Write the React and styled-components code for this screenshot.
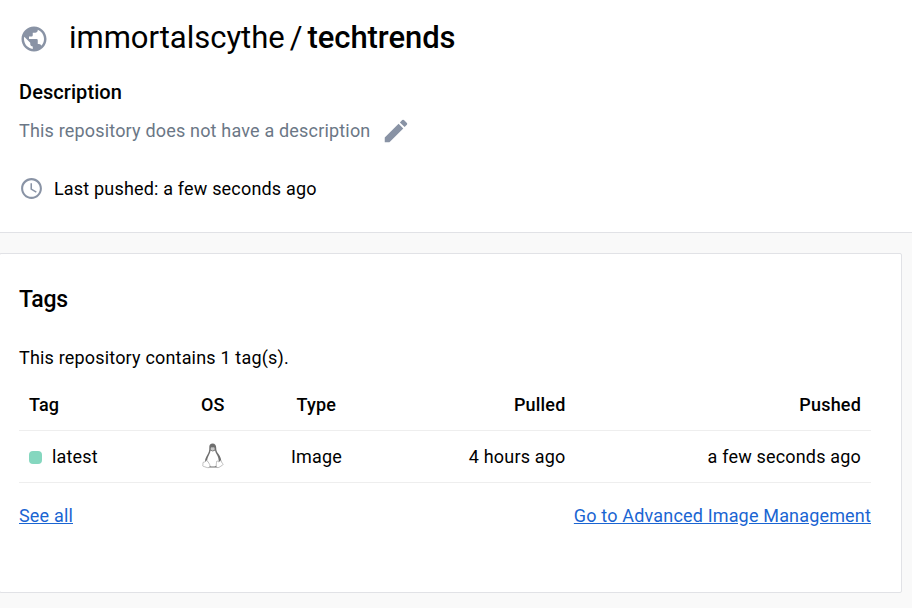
import React from "react";
import styled, { createGlobalStyle } from "styled-components";

const Global = createGlobalStyle`
  * { box-sizing: border-box; }
  body { margin: 0; background: #f9f9f9; font-family: Roboto, "Liberation Sans", sans-serif; font-size: 18px; line-height: 24px; color: #000; letter-spacing: 0.18px; overflow: hidden; }
  h1, h2, p { margin: 0; font-weight: 400; }
`;
const Page = styled.main`
  width: 912px; height: 608px; overflow: hidden;
`;
const Header = styled.header`
  height: 233px; background: #fff; border-bottom: 1px solid #e1e2e6; padding: 18px 19px 0;
`;
const TitleRow = styled.div`
  display: flex; align-items: center; height: 40px; gap: 20px;
  svg { margin-top: 1px; }
`;
const Title = styled.h1`
  display: flex; gap: 5px;
  font-size: 31px; line-height: 40px; letter-spacing: -0.02px;
  b { font-weight: 500; letter-spacing: -0.06px; }
`;
const Label = styled.h2`
  margin-top: 22px; font-size: 20px; font-weight: 500; line-height: 24px; letter-spacing: 0.07px;
`;
const DescriptionRow = styled.div`
  display: flex; align-items: center; height: 30px; margin-top: 12px; gap: 11px; color: #6b7786;
`;
const PushedRow = styled.div`
  display: flex; align-items: center; height: 24px; margin-top: 31px; gap: 10px;
  svg { margin-top: -2px; }
`;
const Card = styled.section`
  width: 903px; height: 340px; margin: 20px 0 0 -1px; padding: 31px 30px 0 19px; background: #fff; border: 1px solid #e1e2e6; border-radius: 2px;
`;
const CardTitle = styled.h2`
  font-size: 23px; line-height: 30px; font-weight: 500; letter-spacing: -0.25px;
`;
const Summary = styled.p`
  margin-top: 31px;
`;
const Table = styled.div`
  margin-top: 9px;
`;
const Row = styled.div`
  display: grid; grid-template-columns: 172px 90px 120px 174.5px 1fr; align-items: center;
  height: 52px; border-bottom: 1px solid #eee; font-weight: ${(p) => (p.$head ? 500 : 400)};
`;
const Cell = styled.div`
  display: flex; align-items: center; padding: 0 10px; padding-left: ${(p) => p.$left ?? 10}px;
  justify-content: ${(p) => (p.$end ? "flex-end" : "flex-start")};
`;
const Dot = styled.span`
  width: 13px; height: 13px; margin: 1px 10px 0 0; border-radius: 4px; background: #85d7bf;
`;
const Links = styled.nav`
  display: flex; justify-content: space-between; margin-top: 21px;
`;
const Link = styled.a`
  color: #1a65d2; text-decoration: underline; letter-spacing: 0.17px;
`;
const TuxIcon = styled.svg`
  display: block; margin: -1px 0 0 1px;
`;

function Tux() {
  return (
    <TuxIcon width="22" height="26" viewBox="0 0 22 26">
      <path d="M7.3 4.5C7.1 1.8 8.5.4 10.7.4s3.5 1.6 3.5 4.3c0 2.9.8 4.3 2.3 6.4 1.9 2.7 3.2 5.8 2.7 8.8L16 24.5H6L3 19.2c-.2-2.6.9-4.9 2.3-7.1 1.5-2.4 2.1-4.4 2-7.6z" fill="#6f6f6f" />
      <path d="M8.5 7.6c1.4 1.1 3 1.1 4.6 0 .4 2.6 2 4.1 2.9 6.5.8 2.2 1 4.7.2 6.9-1.1 1.9-3.2 2.6-5.4 2.6-2.1 0-4-.9-5-2.6-1-2.2-.8-4.5.1-6.7.9-2.2 2.3-3.8 2.6-6.7z" fill="#fff" />
      <path d="M8.7 4.9c.5-.7 1.1-.8 1.7-.3.8-.6 1.6-.5 2.2.2v2c-1.2 1.1-2.6 1.1-3.9 0z" fill="#c8c8c8" />
      <path d="M4.3 17.5c1.4.2 2.3 2.3 3.3 3.9.7 1.3.3 2.8-1 3.2-1.6.3-3.3-.8-5.1-1.2-.9-.2-.9-.8-.6-1.7.2-.8-.2-1.9.3-2.4.8-.6 2-.1 2.3-.8.2-.5.4-1 .8-1zM15.3 18c.6 1.1 2.6 1 3.2-.4 1 0 .9 1.7 1.7 2.5.9.7 1.3 1.2.6 1.8-1.3 1-2.7 1.7-3.7 2.4-1.3.7-2.8.2-2.9-1.2-.1-1.5.4-3.3.3-4.1 0-.5.3-1.1.8-1z" fill="#fff" stroke="#aaa" strokeWidth=".75" />
    </TuxIcon>
  );
}

export default function App() {
  return (
    <Page>
      <Global />
      <Header>
        <TitleRow>
          <svg width="30" height="30" viewBox="0 0 24 24" fill="#8993a5"><path d="M12 2C6.48 2 2 6.48 2 12s4.48 10 10 10 10-4.48 10-10S17.52 2 12 2zm-1 17.93c-3.95-.49-7-3.85-7-7.93 0-.62.08-1.21.21-1.79L9 15v1c0 1.1.9 2 2 2v1.93zm6.9-2.54c-.26-.81-1-1.39-1.9-1.39h-1v-3c0-.55-.45-1-1-1H8v-2h2c.55 0 1-.45 1-1V7h2c1.1 0 2-.9 2-2v-.41c2.93 1.19 5 4.06 5 7.41 0 2.08-.8 3.97-2.1 5.39z" /></svg>
          <Title><span>immortalscythe</span><span>/</span><b>techtrends</b></Title>
        </TitleRow>
        <Label>Description</Label>
        <DescriptionRow>
          This repository does not have a description
          <svg width="30" height="30" viewBox="0 0 24 24" fill="#8993a5"><path d="M3 17.25V21h3.75L17.81 9.94l-3.75-3.75L3 17.25zM20.71 7.04c.39-.39.39-1.02 0-1.41l-2.34-2.34a.9959.9959 0 0 0-1.41 0l-1.83 1.83 3.75 3.75 1.83-1.83z" /></svg>
        </DescriptionRow>
        <PushedRow>
          <svg width="25" height="25" viewBox="0 0 24 24" fill="#8993a5"><path d="M11.99 2C6.47 2 2 6.48 2 12s4.47 10 9.99 10C17.52 22 22 17.52 22 12S17.52 2 11.99 2zM12 20c-4.42 0-8-3.58-8-8s3.58-8 8-8 8 3.58 8 8-3.58 8-8 8zm.5-13H11v6l5.25 3.15.75-1.23-4.5-2.67V7z" /></svg>
          Last pushed: a few seconds ago
        </PushedRow>
      </Header>
      <Card>
        <CardTitle>Tags</CardTitle>
        <Summary>This repository contains 1 tag(s).</Summary>
        <Table>
          <Row $head>
            <Cell>Tag</Cell><Cell>OS</Cell><Cell $left={15.5}>Type</Cell><Cell $end>Pulled</Cell><Cell $end>Pushed</Cell>
          </Row>
          <Row>
            <Cell><Dot />latest</Cell>
            <Cell><Tux /></Cell>
            <Cell>Image</Cell><Cell $end>4 hours ago</Cell><Cell $end>a few seconds ago</Cell>
          </Row>
        </Table>
        <Links><Link>See all</Link><Link>Go to Advanced Image Management</Link></Links>
      </Card>
    </Page>
  );
}
